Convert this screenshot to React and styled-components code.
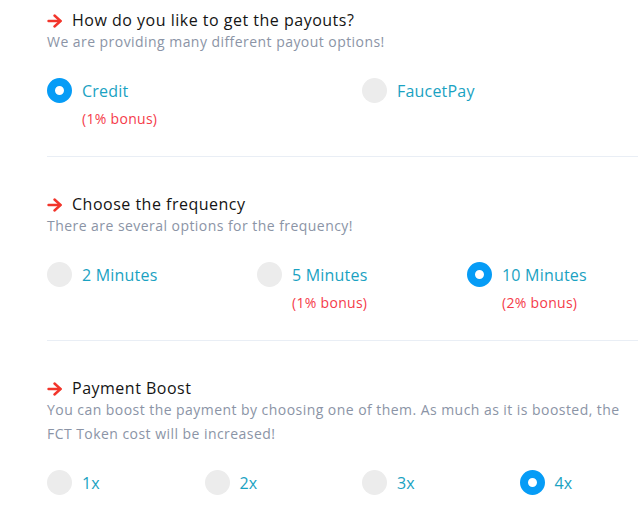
import React from "react";
import styled, { createGlobalStyle } from "styled-components";

const GlobalStyle = createGlobalStyle`
    html, body {
        margin: 0;
        padding: 0;
        background: #ffffff;
        overflow: hidden;
    }
    body {
        font-family: "Open Sans", "Liberation Sans", sans-serif;
    }
`;

const Page = styled.div`
    width: 630px;
    margin-left: 47px;
`;

const Section = styled.section`
    padding: ${(p) => (p.first ? "11px" : "38px")} 0 ${(p) => (p.last ? "0" : "27px")};
    border-top: ${(p) => (p.first ? "none" : "1px solid #e9eef5")};
`;

const Heading = styled.h3`
    display: flex;
    align-items: center;
    gap: 10px;
    margin: 0;
    font-size: 16px;
    line-height: 19px;
    font-weight: 500;
    letter-spacing: 0.5px;
    color: #141414;
`;

const Subtitle = styled.p`
    max-width: 590px;
    margin: 0;
    font-size: 14px;
    line-height: 24px;
    letter-spacing: 0.45px;
    color: #8b94a6;
`;

const Options = styled.div`
    display: grid;
    grid-template-columns: repeat(${(p) => p.cols}, 1fr);
    margin-top: 24px;
`;

const Option = styled.label`
    display: flex;
    flex-direction: column;
    cursor: pointer;
`;

const OptionRow = styled.div`
    display: flex;
    align-items: center;
    gap: 10px;
    height: 25px;
`;

const Radio = styled.span`
    box-sizing: border-box;
    width: 25px;
    height: 25px;
    border-radius: 50%;
    flex-shrink: 0;
    background: ${(p) => (p.checked ? "#ffffff" : "#ececec")};
    border: ${(p) => (p.checked ? "8.5px solid #069cf6" : "none")};
`;

const Label = styled.span`
    font-size: 16px;
    line-height: 24px;
    letter-spacing: 0.2px;
    color: #1aa2c2;
`;

const Bonus = styled.span`
    margin: 6px 0 0 35px;
    font-size: 14px;
    line-height: 20px;
    letter-spacing: 0.3px;
    color: #f53b4a;
`;

function Arrow() {
    return (
        <svg width="15" height="14" viewBox="0 0 15 14" fill="none" stroke="#f2352b" strokeWidth="2.4" strokeLinecap="round" strokeLinejoin="round">
            <path d="M1.5 7h12" />
            <path d="M7.5 1.5L13.5 7l-6 5.5" />
        </svg>
    );
}

const sections = [
    {
        title: "How do you like to get the payouts?",
        text: "We are providing many different payout options!",
        options: [
            { label: "Credit", bonus: "(1% bonus)", checked: true },
            { label: "FaucetPay" },
        ],
    },
    {
        title: "Choose the frequency",
        text: "There are several options for the frequency!",
        options: [
            { label: "2 Minutes" },
            { label: "5 Minutes", bonus: "(1% bonus)" },
            { label: "10 Minutes", bonus: "(2% bonus)", checked: true },
        ],
    },
    {
        title: "Payment Boost",
        text: "You can boost the payment by choosing one of them. As much as it is boosted, the FCT Token cost will be increased!",
        options: [
            { label: "1x" },
            { label: "2x" },
            { label: "3x" },
            { label: "4x", checked: true },
        ],
    },
];

export default function App() {
    return (
        <Page>
            <GlobalStyle />
            {sections.map((s, i) => (
                <Section key={s.title} first={i === 0} last={i === sections.length - 1}>
                    <Heading>
                        <Arrow />
                        {s.title}
                    </Heading>
                    <Subtitle>{s.text}</Subtitle>
                    <Options cols={s.options.length}>
                        {s.options.map((o) => (
                            <Option key={o.label}>
                                <OptionRow>
                                    <Radio checked={o.checked} />
                                    <Label>{o.label}</Label>
                                </OptionRow>
                                {o.bonus && <Bonus>{o.bonus}</Bonus>}
                            </Option>
                        ))}
                    </Options>
                </Section>
            ))}
        </Page>
    );
}
